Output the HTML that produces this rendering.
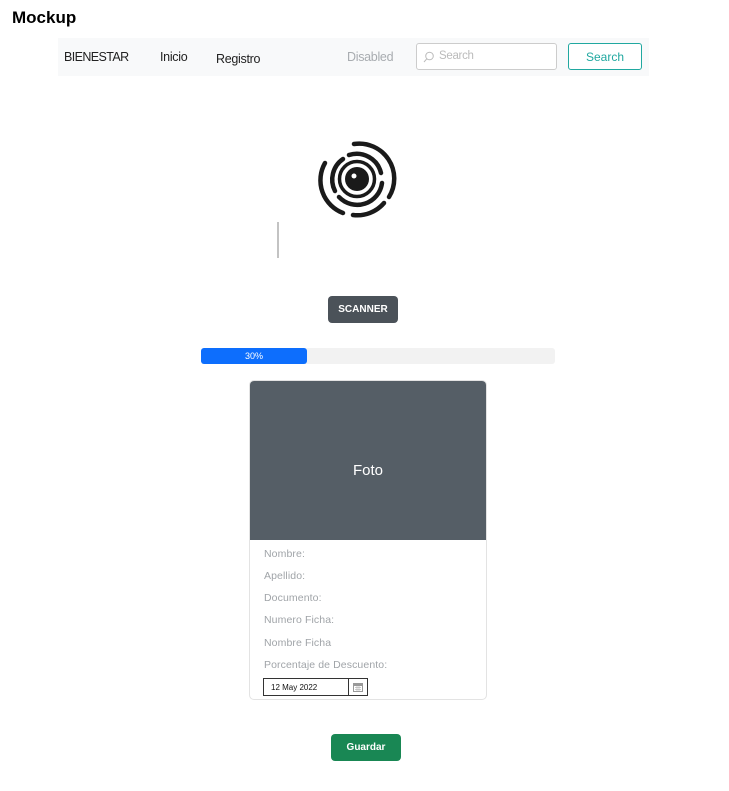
<!DOCTYPE html>
<html><head><meta charset="utf-8"><style>
*{box-sizing:border-box;margin:0;padding:0}
body{width:729px;height:791px;background:#fff;font-family:"Liberation Sans",sans-serif;position:relative;overflow:hidden}
.abs{position:absolute}
.nav{left:58px;top:38px;width:591px;height:38px;background:#f8f9fa}
.nav span{position:absolute;font-size:12.5px;color:#222;letter-spacing:-0.3px}
.lbl{position:absolute;left:264px;font-size:10.5px;color:#a0a4a8;letter-spacing:0.1px}
</style></head><body>
<div class="abs" style="left:12px;top:8px;font-size:17px;font-weight:bold;color:#000">Mockup</div>
<div class="abs nav">
<span style="left:6px;top:12px;letter-spacing:-0.6px">BIENESTAR</span>
<span style="left:102px;top:12px">Inicio</span>
<span style="left:158px;top:14px">Registro</span>
<span style="left:289px;top:12px;color:#a8acb0">Disabled</span>
<div class="abs" style="left:358px;top:5px;width:141px;height:27px;border:1px solid #ccc;border-radius:3px;background:#fff">
<svg class="abs" style="left:6px;top:7px" width="12" height="12" viewBox="0 0 12 12"><circle cx="6.5" cy="5" r="3.8" fill="none" stroke="#bbb"/><line x1="3.8" y1="7.8" x2="1" y2="11" stroke="#bbb"/></svg>
<span style="left:22px;top:6px;color:#bbb;font-size:11.5px">Search</span></div>
<div class="abs" style="left:510px;top:5px;width:74px;height:27px;border:1px solid #20a8a0;border-radius:3px;color:#20a8a0;font-size:12px;text-align:center;line-height:26px;background:#fff">Search</div>
</div>
<svg class="abs" style="left:310px;top:132px" width="94" height="94" viewBox="-47 -47 94 94" fill="none" stroke="#1a1a1a" stroke-width="4.5" stroke-linecap="round">
<circle cx="0" cy="0" r="12" fill="#1a1a1a" stroke="none"/>
<circle cx="-3" cy="-3" r="2.5" fill="#fff" stroke="none"/>
<circle cx="0" cy="0" r="17.5" stroke-width="3.5"/>
<path d="M-8 -24 A25 25 0 0 1 24 -6"/>
<path d="M25 4 A25 25 0 0 1 -18 18"/>
<path d="M-22 12 A25 25 0 0 1 -14 -20"/>
<path d="M-3 -35 A35 35 0 0 1 32 18"/>
<path d="M27 24 A35 35 0 0 1 -4 36"/>
<path d="M-14 34 A35 35 0 0 1 -32 -16"/>
</svg>
<div class="abs" style="left:277px;top:222px;width:2px;height:36px;background:#888;opacity:.5"></div>
<div class="abs" style="left:328px;top:296px;width:70px;height:27px;background:#4b5259;border-radius:4px;color:#fff;font-size:10px;font-weight:bold;text-align:center;line-height:28px">SCANNER</div>
<div class="abs" style="left:201px;top:348px;width:354px;height:16px;background:#f2f2f2;border-radius:3px">
<div style="width:106px;height:16px;background:#0d6efd;border-radius:3px;color:#fff;font-size:9px;text-align:center;line-height:16px">30%</div></div>
<div class="abs" style="left:249px;top:380px;width:238px;height:320px;border:1px solid #e3e3e3;border-radius:5px;overflow:hidden">
<div style="height:159px;background:#555e66;color:#fff;font-size:15px;text-align:center;line-height:180px">Foto</div></div>
<div class="lbl" style="top:548px">Nombre:</div>
<div class="lbl" style="top:570px">Apellido:</div>
<div class="lbl" style="top:592px">Documento:</div>
<div class="lbl" style="top:614px">Numero Ficha:</div>
<div class="lbl" style="top:637px">Nombre Ficha</div>
<div class="lbl" style="top:659px">Porcentaje de Descuento:</div>
<div class="abs" style="left:263px;top:678px;width:105px;height:18px;border:1px solid #333;font-size:8px;line-height:17px;padding-left:7px;color:#111">12 May 2022
<div class="abs" style="left:84px;top:0;width:1px;height:16px;background:#333"></div>
<svg class="abs" style="left:89px;top:3px" width="10" height="10" viewBox="0 0 10 10"><rect x="0.5" y="1.5" width="9" height="8" fill="none" stroke="#999"/><rect x="1" y="2" width="8" height="2" fill="#999"/><path d="M2 5.5h6M2 7.5h6M4 4v5M6 4v5" stroke="#bbb" stroke-width=".8"/></svg></div>
<div class="abs" style="left:331px;top:734px;width:70px;height:27px;background:#198754;border-radius:4px;color:#fff;font-size:10px;font-weight:bold;text-align:center;line-height:28px">Guardar</div>
</body></html>
